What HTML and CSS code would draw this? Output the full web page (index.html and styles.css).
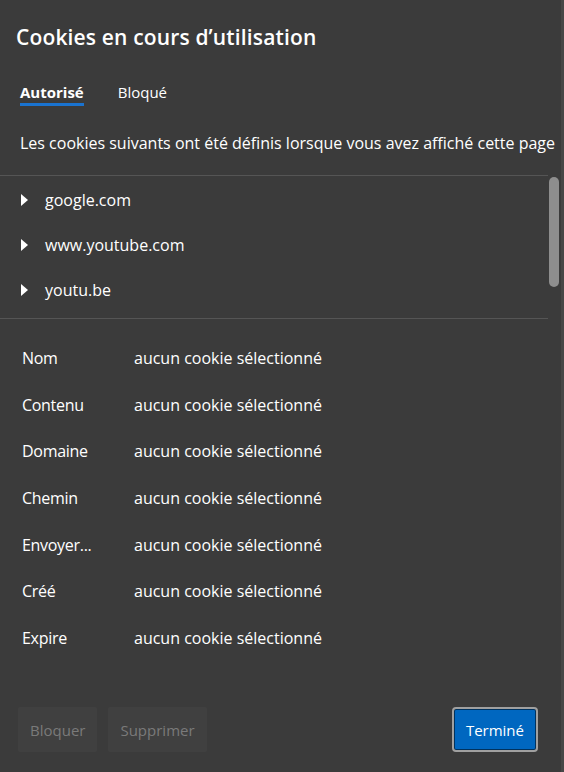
FILE: index.html
```html
<!DOCTYPE html>
<html lang="fr">
<head>
<meta charset="utf-8">
<link rel="stylesheet" href="styles.css">
</head>
<body>
<div class="dialog">
  <h1 class="title">Cookies en cours d’utilisation</h1>
  <div class="tabs">
    <div class="tab active">Autorisé</div>
    <div class="tab">Bloqué</div>
  </div>
  <p class="desc">Les cookies suivants ont été définis lorsque vous avez affiché cette page</p>
  <div class="tree">
    <div class="tree-list">
      <div class="site"><span class="caret"></span><span>google.com</span></div>
      <div class="site"><span class="caret"></span><span>www.youtube.com</span></div>
      <div class="site"><span class="caret"></span><span>youtu.be</span></div>
    </div>
    <div class="scrollbar"><div class="thumb"></div></div>
  </div>
  <div class="details">
    <div class="row"><span class="label">Nom</span><span class="value">aucun cookie sélectionné</span></div>
    <div class="row"><span class="label">Contenu</span><span class="value">aucun cookie sélectionné</span></div>
    <div class="row"><span class="label">Domaine</span><span class="value">aucun cookie sélectionné</span></div>
    <div class="row"><span class="label">Chemin</span><span class="value">aucun cookie sélectionné</span></div>
    <div class="row"><span class="label">Envoyer...</span><span class="value">aucun cookie sélectionné</span></div>
    <div class="row"><span class="label">Créé</span><span class="value">aucun cookie sélectionné</span></div>
    <div class="row"><span class="label">Expire</span><span class="value">aucun cookie sélectionné</span></div>
  </div>
  <div class="actions">
    <button class="btn disabled">Bloquer</button>
    <button class="btn disabled">Supprimer</button>
    <span class="spacer"></span>
    <button class="btn primary">Terminé</button>
  </div>
</div>
</body>
</html>
```
FILE: styles.css
```css
html, body {
  margin: 0;
  padding: 0;
  background: #3b3b3b;
}
body {
  width: 564px;
  height: 772px;
  overflow: hidden;
  font-family: "Open Sans", "Noto Sans", sans-serif;
  color: #ffffff;
}
.dialog {
  width: 561px;
  height: 772px;
  border-right: 3px solid #474747;
  display: flex;
  flex-direction: column;
}
.title {
  margin: 23px 0 0 16px;
  font-size: 21px;
  font-weight: 600;
  line-height: 28px;
  letter-spacing: 0.15px;
}
.tabs {
  display: flex;
  gap: 34px;
  margin: 31px 0 0 20px;
}
.tab {
  font-size: 15px;
  line-height: 20px;
  padding-bottom: 4px;
}
.tab.active {
  font-weight: 700;
  padding-bottom: 1px;
  border-bottom: 3px solid #1a73d0;
}
.desc {
  margin: 27px 0 0 20px;
  font-size: 16px;
  line-height: 20px;
  white-space: nowrap;
}
.tree {
  margin-top: 22px;
  width: 548px;
  height: 142px;
  border-top: 1px solid #555555;
  border-bottom: 1px solid #555555;
  display: flex;
  position: relative;
}
.tree-list {
  flex: 1;
  padding-top: 14px;
  display: flex;
  flex-direction: column;
  gap: 25px;
}
.site {
  display: flex;
  align-items: center;
  gap: 17px;
  padding-left: 21px;
  font-size: 16px;
  line-height: 20px;
}
.caret {
  width: 0;
  height: 0;
  border-top: 6px solid transparent;
  border-bottom: 6px solid transparent;
  border-left: 7px solid #ffffff;
}
.scrollbar {
  position: absolute;
  right: -12px;
  top: 1px;
  width: 11px;
  height: 110px;
}
.thumb {
  width: 10px;
  height: 110px;
  background: #8e8e8e;
  border-radius: 5px;
}
.details {
  margin-top: 29px;
  display: flex;
  flex-direction: column;
  gap: 26.7px;
}
.row {
  display: flex;
  font-size: 16px;
  line-height: 20px;
}
.label {
  width: 112px;
  padding-left: 22px;
  letter-spacing: -0.3px;
}
.actions {
  margin-top: auto;
  margin-bottom: 20px;
  display: flex;
  align-items: center;
  gap: 11px;
  padding: 0 25px 0 18px;
}
.spacer {
  flex: 1;
}
.btn {
  font-family: inherit;
  font-size: 15px;
  height: 45px;
  padding: 0 12px;
  border: none;
  border-radius: 2px;
}
.btn.disabled {
  background: #404040;
  color: #7a7a7a;
}
.btn.primary {
  height: 41px;
  padding: 0 11px;
  background: #0067c0;
  color: #ffffff;
  border: 1px solid #00325e;
  outline: 2px solid #a0a0a0;
  outline-offset: 0;
}
```
